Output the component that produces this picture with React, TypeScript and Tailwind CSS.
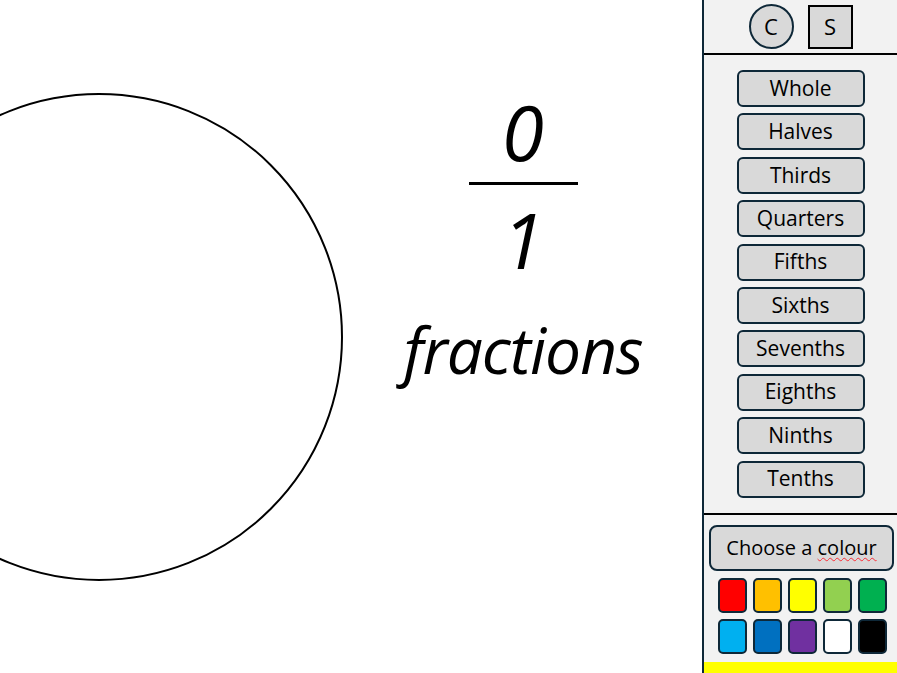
import React from "react";

const fractions = ["Whole","Halves","Thirds","Quarters","Fifths","Sixths","Sevenths","Eighths","Ninths","Tenths"];
const row1 = ["#ff0000","#ffc000","#ffff00","#92d050","#00b050"];
const row2 = ["#00b0f0","#0070c0","#7030a0","#ffffff","#000000"];

export default function App() {
  const font = { fontFamily: '"Open Sans", "Noto Sans", sans-serif' };
  return (
    <div className="flex w-[897px] h-[673px] overflow-hidden bg-white text-black" style={font}>
      <div className="flex w-[702px] h-full">
        <svg width="344" height="673" className="shrink-0">
          <circle cx="99" cy="337" r="243" fill="none" stroke="#000" strokeWidth="2" />
        </svg>
        <div className="flex-1 flex flex-col items-center pt-[84px]">
          <div className="text-[76px] leading-[96px] italic">0</div>
          <div className="w-[109px] h-[3px] bg-black mt-[2px]"></div>
          <div className="text-[76px] leading-[96px] italic mt-[7px]">1</div>
          <div className="text-[64px] leading-[80px] italic mt-[22px] tracking-[-1px]">fractions</div>
        </div>
      </div>
      <div className="w-[195px] h-full border-l-2 border-[#0e2838] bg-[#f2f2f2] flex flex-col">
        <div className="h-[55px] border-b-2 border-black flex items-center justify-center gap-[14px] shrink-0">
          <div className="w-[45px] h-[45px] rounded-full border-2 border-[#0e2838] bg-[#d9d9d9] flex items-center justify-center text-[22px]">C</div>
          <div className="w-[45px] h-[44px] border-2 border-black bg-[#d9d9d9] flex items-center justify-center text-[22px]">S</div>
        </div>
        <div className="flex flex-col items-center gap-[6.4px] pt-[15px] h-[460px] border-b-2 border-black shrink-0">
          {fractions.map((f) => (
            <div key={f} className="w-[128px] h-[37px] rounded-[6px] border-2 border-[#0e2838] bg-[#d9d9d9] flex items-center justify-center text-[21px]">
              {f}
            </div>
          ))}
        </div>
        <div className="flex flex-col items-center pt-[10px]">
          <div className="w-[185px] h-[46px] ml-[2px] rounded-[8px] border-2 border-[#0e2838] bg-[#d9d9d9] flex items-center justify-center text-[20px]">
            <span>Choose a <span className="underline decoration-wavy decoration-red-500 decoration-1 underline-offset-2">colour</span></span>
          </div>
          <div className="flex gap-[6px] mt-[7px] ml-[4px]">
            {row1.map((c) => (
              <div key={c} className="w-[29px] h-[35px] rounded-[5px] border-2 border-[#0e2838]" style={{ backgroundColor: c }} />
            ))}
          </div>
          <div className="flex gap-[6px] mt-[6px] ml-[4px]">
            {row2.map((c) => (
              <div key={c} className="w-[29px] h-[35px] rounded-[5px] border-2 border-[#0e2838]" style={{ backgroundColor: c }} />
            ))}
          </div>
        </div>
        <div className="mt-auto h-[11px] bg-[#ffff00]"></div>
      </div>
    </div>
  );
}
